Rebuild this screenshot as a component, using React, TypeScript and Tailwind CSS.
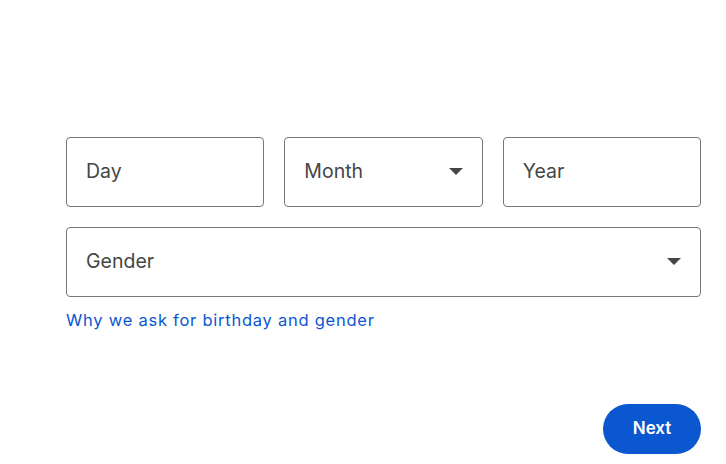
import React from "react";

const Arrow = () => (
  <svg width="14" height="7" viewBox="0 0 14 7" className="shrink-0">
    <path d="M0 0h14L7 7z" fill="#444746" />
  </svg>
);

const Field = ({ label, select = false, className = "" }: { label: string; select?: boolean; className?: string }) => (
  <div
    className={`h-[70px] rounded-[4px] border border-[#747775] flex items-center justify-between pl-[19px] pr-[19px] pb-[1px] ${className}`}
  >
    <span className="text-[19.5px] text-[#444746]">{label}</span>
    {select && <Arrow />}
  </div>
);

export default function App() {
  return (
    <div
      className="w-[726px] h-[464px] bg-white pl-[66px] pr-[25px] pt-[137px]"
      style={{ fontFamily: "Inter, Roboto, Arial, sans-serif" }}
    >
      <div className="grid grid-cols-3 gap-[20px]">
        <Field label="Day" />
        <Field label="Month" select />
        <Field label="Year" />
      </div>
      <Field label="Gender" select className="mt-[20px]" />
      <div className="mt-[12px] text-[16.5px] text-[#0b57d0] leading-[22px] tracking-[0.75px]">
        Why we ask for birthday and gender
      </div>
      <div className="flex justify-end mt-[73px]">
        <button className="w-[98px] h-[50px] rounded-full bg-[#0b57d0] text-white text-[17px] font-semibold">
          Next
        </button>
      </div>
    </div>
  );
}
